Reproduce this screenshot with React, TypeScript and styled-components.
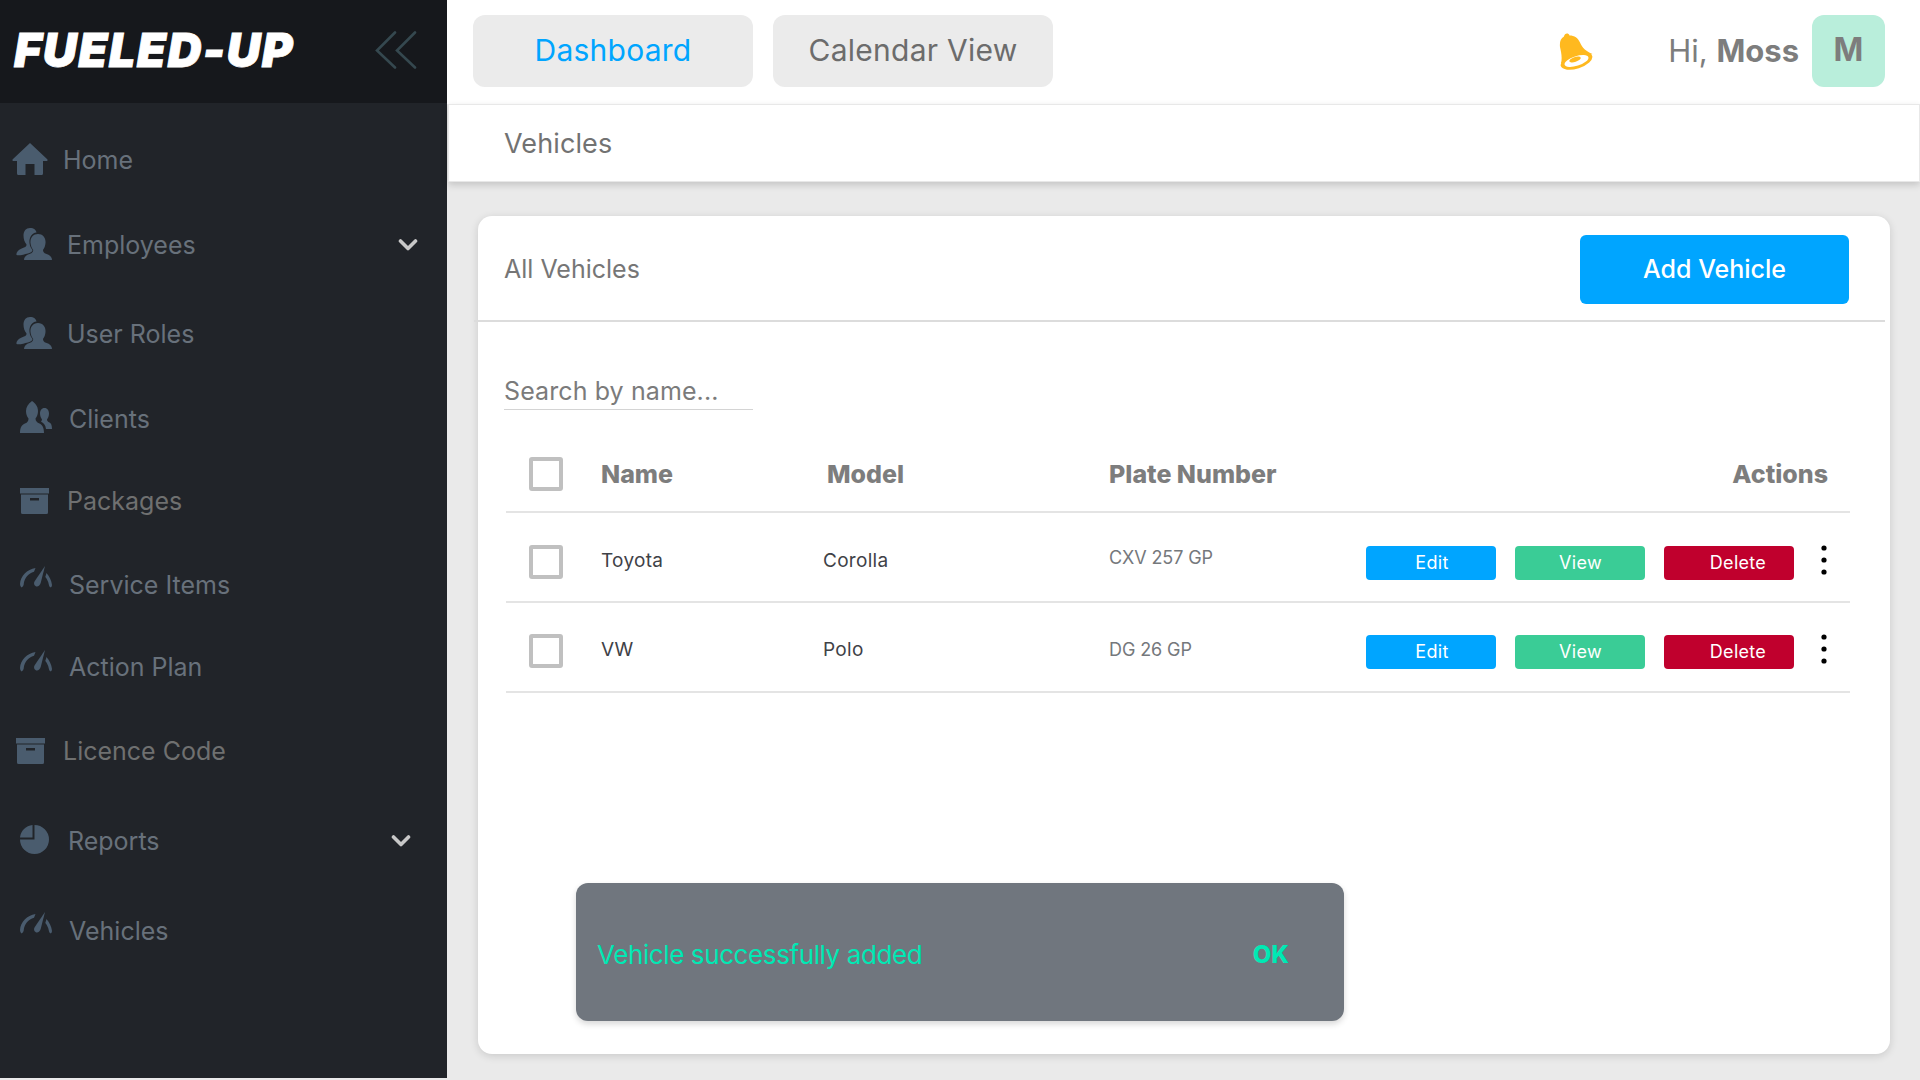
import React from 'react';
import styled, { createGlobalStyle } from 'styled-components';

const GlobalStyle = createGlobalStyle`
    html, body {
        margin: 0;
        padding: 0;
        background: #eaeaea;
    }
    body {
        font-family: Inter, 'Noto Sans', 'Liberation Sans', sans-serif;
    }
    * {
        box-sizing: border-box;
    }
`;

const Page = styled.div`
    display: flex;
    align-items: flex-start;
    width: 1920px;
    height: 1080px;
    overflow: hidden;
    background: #eaeaea;
`;

const Sidebar = styled.aside`
    flex: 0 0 447px;
    height: 1078px;
    background: #212429;
`;

const Brand = styled.div`
    display: flex;
    align-items: center;
    justify-content: space-between;
    height: 103px;
    padding: 0 30px 4px 14px;
    background: #16181c;
`;

const Logo = styled.div`
    color: #fff;
    font-size: 47px;
    font-weight: 900;
    font-style: italic;
    letter-spacing: 1.4px;
    -webkit-text-stroke: 0.8px #fff;
`;

const NavList = styled.nav`
    display: flex;
    flex-direction: column;
`;

const NavItem = styled.div<{ $height: number; $indent: number; $gap: number; $shift: number }>`
    display: flex;
    align-items: center;
    height: ${(p) => p.$height}px;
    padding-left: ${(p) => p.$indent}px;
    padding-top: ${(p) => Math.max(0, p.$shift * 2)}px;
    padding-bottom: ${(p) => Math.max(0, -p.$shift * 2)}px;
    gap: ${(p) => p.$gap}px;
`;

const NavIconBox = styled.span<{ $lift: number }>`
    display: flex;
    margin-top: ${(p) => -p.$lift}px;
    color: #4a5c6e;
`;

const NavLabel = styled.span<{ $muted?: boolean }>`
    color: ${(p) => (p.$muted ? '#6f7070' : '#68717b')};
    font-size: 25px;
`;

const NavChevron = styled.span<{ $right: number }>`
    display: flex;
    margin-left: auto;
    margin-right: ${(p) => p.$right}px;
    color: #c8c8c8;
`;

const Main = styled.main`
    flex: 1;
    min-width: 0;
    display: flex;
    flex-direction: column;
`;

const TopBar = styled.header`
    display: flex;
    align-items: center;
    gap: 20px;
    height: 104px;
    padding: 0 35px 2px 26px;
    background: #fff;
`;

const TopTab = styled.div<{ $active?: boolean }>`
    display: flex;
    align-items: center;
    justify-content: center;
    width: 280px;
    height: 72px;
    padding-bottom: 2px;
    border-radius: 12px;
    background: #ebebeb;
    color: ${(p) => (p.$active ? '#00a5ff' : '#6c6c6c')};
    font-size: 30px;
    letter-spacing: 0.25px;
`;

const UserArea = styled.div`
    display: flex;
    align-items: center;
    margin-left: auto;
`;

const BellBox = styled.span`
    display: flex;
    margin-right: 75px;
`;

const Greeting = styled.span`
    margin-right: 13px;
    padding-bottom: 2px;
    color: #7d7d7d;
    font-size: 31px;

    b {
        font-weight: 700;
    }
`;

const Avatar = styled.div`
    display: flex;
    align-items: center;
    justify-content: center;
    width: 73px;
    height: 72px;
    padding-bottom: 4px;
    border-radius: 12px;
    background: #b9eedb;
    color: #7d7d7d;
    font-size: 32px;
    font-weight: 700;
`;

const SubBar = styled.div`
    display: flex;
    align-items: center;
    height: 78px;
    margin-left: 1px;
    padding-left: 55px;
    background: #fff;
    border: 1px solid #e8e8e8;
    box-shadow: 0 3px 7px rgba(0, 0, 0, 0.16);
    color: #727272;
    font-size: 27px;
    letter-spacing: 0.1px;
`;

const Card = styled.section`
    position: relative;
    height: 838px;
    margin: 34px 30px 0 31px;
    border-radius: 14px;
    background: #fff;
    box-shadow: 0 2px 8px rgba(0, 0, 0, 0.14);
`;

const CardHeader = styled.div`
    display: flex;
    align-items: center;
    justify-content: space-between;
    height: 104px;
    padding: 2px 41px 0 26px;
`;

const CardTitle = styled.h2`
    margin: 0;
    color: #767676;
    font-size: 25px;
    font-weight: 400;
`;

const AddButton = styled.button`
    width: 269px;
    height: 69px;
    border: 0;
    border-radius: 6px;
    background: #00a5ff;
    color: #fff;
    font-family: inherit;
    font-size: 25px;
    font-weight: 500;
`;

const HeaderRule = styled.hr`
    height: 2px;
    margin: 0 5px 0 -4px;
    border: 0;
    background: #dcdcdc;
`;

const SearchBox = styled.div`
    display: flex;
    align-items: center;
    width: 249px;
    height: 46px;
    margin: 42px 0 0 26px;
    padding-top: 8px;
    border-bottom: 1px solid #d4d4d4;
    color: #7b7b7b;
    font-size: 25px;
    letter-spacing: 0.1px;
`;

const Table = styled.div`
    margin: 16px 40px 0 28px;
`;

const HeadRow = styled.div`
    display: grid;
    grid-template-columns: 95px 222px 286px 257px 1fr;
    align-items: center;
    height: 87px;
    padding-top: 10px;
    border-bottom: 2px solid #e4e4e4;
`;

const BodyRow = styled.div<{ $top: number }>`
    display: grid;
    grid-template-columns: 95px 222px 286px 257px 1fr;
    align-items: center;
    height: 90px;
    padding-top: ${(p) => p.$top}px;
    border-bottom: 2px solid #e4e4e4;
`;

const CheckCell = styled.div<{ $drop?: number }>`
    padding-left: 23px;
    padding-top: ${(p) => p.$drop || 0}px;
`;

const CheckBox = styled.span`
    display: block;
    width: 34px;
    height: 34px;
    border: 4px solid #c0c0c0;
    border-radius: 3px;
`;

const HeadCell = styled.div<{ $inset?: number; $align?: string }>`
    padding-left: ${(p) => p.$inset || 0}px;
    padding-right: ${(p) => (p.$align ? 22 : 0)}px;
    text-align: ${(p) => p.$align || 'left'};
    color: #7d7d7d;
    font-size: 25px;
    font-weight: 800;
`;

const BodyCell = styled.div`
    color: #3f4247;
    font-size: 19px;
    letter-spacing: 0.3px;
`;

const PlateCell = styled.div<{ $lift: number }>`
    padding-bottom: ${(p) => p.$lift}px;
    color: #75787c;
    font-size: 18px;
    letter-spacing: -0.1px;
`;

const ActionCell = styled.div`
    display: flex;
    align-items: center;
    gap: 19px;
`;

const ActionButton = styled.button<{ $color: string; $inset: number }>`
    width: 130px;
    height: 34px;
    margin-top: 5px;
    padding: 0 0 0 ${(p) => p.$inset}px;
    border: 0;
    border-radius: 4px;
    background: ${(p) => p.$color};
    color: #fff;
    font-family: inherit;
    font-size: 18px;
    letter-spacing: 0.3px;
`;

const MoreBox = styled.span`
    display: flex;
    margin-left: 8px;
`;

const Snackbar = styled.div`
    position: absolute;
    left: 98px;
    top: 667px;
    display: flex;
    align-items: center;
    justify-content: space-between;
    width: 768px;
    height: 138px;
    padding: 5px 55px 0 21px;
    border-radius: 12px;
    background: #70767e;
    box-shadow: 0 3px 6px rgba(0, 0, 0, 0.16);
    color: #00e9b4;
`;

const SnackText = styled.span`
    font-size: 26px;
    letter-spacing: -0.4px;
`;

const SnackAction = styled.span`
    font-size: 24px;
    font-weight: 800;
`;

const HomeIcon = () => (
    <svg width="36" height="32" viewBox="0 0 36 32" fill="currentColor">
        <path d="M18 0 35.5 16.5Q36 18 34.5 18H31V30.5Q31 32 29.5 32H22.5V21H13.5V32H6.5Q5 32 5 30.5V18H1.5Q0 18 .5 16.5Z" />
    </svg>
);

const UserPairIcon = () => (
    <svg width="36" height="32" viewBox="0 0 36 32" fill="currentColor">
        <path d="M14 0C18 0 20 2 20.5 4.500C16 5 13 9 13.500 15C13.800 18 15 20 16.500 22C16.500 23.500 15 24.500 12 25.500C8 26.500 3 28 .5 27C0 24 3 21 8 19.500C10 18.800 10.500 18 10.500 16.500C8.500 14 7.500 11 7.500 7.500C7.500 3 10 0 14 0Z" />
        <path d="M22 6C27 6 30 10 29.500 15C29.300 18 28.300 20 27 22C27 24 28 25 30 25.800C34 27 36 29 36 32H8C8 29 10 27 14 25.800C16 25 17.200 24 17.200 22C15.800 20 14.800 18 14.500 15C14 10 17 6 22 6Z" />
    </svg>
);

const ClientsIcon = () => (
    <svg width="32" height="32" viewBox="0 0 32 32" fill="currentColor">
        <path d="M12 0C15 2 18 5 18 10C18 13 17 15.500 15.500 17.500C15.500 20 17 21.500 19.500 22.500C22 23.800 24 26 24 32H0C0 26 2 23.800 5 22.500C7.500 21.500 8.500 20 8.500 17.500C7 15.500 6 13 6 10C6 6 8 3 12 0Z" />
        <path d="M24.500 7C27.500 7 29 9.500 29 12.500C29 15 28 17 27 18.500C27 20 28 20.800 29.500 21.500C31 22.300 32 24 32 28H26C25.500 24 23.500 22 21 20.800C21.500 20 21.800 19.300 22 18.500C21 17 20 15 20 12.500C20 9.500 21.500 7 24.500 7Z" />
    </svg>
);

const GaugeIcon = () => (
    <svg width="32" height="22" viewBox="0 0 32 22" fill="currentColor">
        <path d="M1.500 21.500Q0 20.500 0 18C.5 10 7 3.500 15.500 2L14 5.800C8.500 7.500 4.200 12 3.700 18.500Q3.500 20.500 1.500 21.500Z" />
        <path d="M25 0 20.800 16.500C20 19.500 17.800 21 15.800 20.200C13.800 19.300 13.500 17 14.800 15Z" />
        <path d="M26.500 7C29.500 10.500 31.500 14.500 32 19Q32 20.800 30.800 21.500Q29 20.800 28.800 18.500C28.300 15.500 27 13 25.300 11Z" />
    </svg>
);

const BoxIcon = () => (
    <svg width="29" height="26" viewBox="0 0 29 26" fill="currentColor" fillRule="evenodd">
        <rect x="0" y="0" width="29" height="5.500" />
        <path d="M1 6.500H28V24.500Q28 26 26.500 26H2.500Q1 26 1 24.500ZM10 10V12.500H19V10Z" />
    </svg>
);

const PieIcon = () => (
    <svg width="29" height="29" viewBox="0 0 29 29" fill="currentColor">
        <path d="M14.500 0A14.500 14.500 0 1 1 0 14.500H14.500Z" />
        <path d="M12.500 0V12.500H0A14 14 0 0 1 12.500 0Z" />
    </svg>
);

const ChevronIcon = () => (
    <svg width="20" height="14" viewBox="0 0 20 14" fill="none">
        <path d="M2.500 3 10 10.500 17.500 3" stroke="currentColor" strokeWidth="3.600" strokeLinecap="round" strokeLinejoin="round" />
    </svg>
);

const CollapseIcon = () => (
    <svg width="42" height="38" viewBox="0 0 42 38" fill="none" stroke="#35484f" strokeWidth="2.600" strokeLinecap="round">
        <path d="M20 1.500 2 19.500 20 36.500" />
        <path d="M40 1.500 22 19.500 40 36.500" />
    </svg>
);

const BellIcon = () => (
    <svg width="34" height="37" viewBox="0 0 34 37" fill="none">
        <path d="M5 3.500C5.500 0 9.500-.5 10.500 2.500C15.500 2.500 19 5 21 9.500C23 14.500 27 18.500 33.500 21L2 30.500C3.500 24 2 19 1 14C.5 9 1.500 5.500 5 3.500Z" fill="#ffb91f" />
        <ellipse cx="17.500" cy="28" rx="16.500" ry="7.500" transform="rotate(-18 17.500 28)" fill="#ffb91f" />
        <ellipse cx="17.500" cy="28" rx="12.500" ry="4.800" transform="rotate(-18 17.500 28)" fill="#fff" />
        <ellipse cx="16" cy="26.500" rx="6" ry="2.400" transform="rotate(-18 16 26.500)" fill="#ffb91f" />
    </svg>
);

const MoreIcon = () => (
    <svg width="6" height="30" viewBox="0 0 6 30" fill="#000">
        <circle cx="3" cy="3" r="2.600" />
        <circle cx="3" cy="15" r="2.600" />
        <circle cx="3" cy="27" r="2.600" />
    </svg>
);

const NAV_ITEMS = [
    { label: 'Home', icon: <HomeIcon />, height: 99, indent: 12, gap: 15, lift: 2, shift: 7 },
    { label: 'Employees', icon: <UserPairIcon />, height: 85, indent: 16, gap: 15, lift: 2, shift: 0, chevron: 29 },
    { label: 'User Roles', icon: <UserPairIcon />, height: 89, indent: 16, gap: 15, lift: 2, shift: 2 },
    { label: 'Clients', icon: <ClientsIcon />, height: 84, indent: 20, gap: 17, lift: 4, shift: 1 },
    { label: 'Packages', icon: <BoxIcon />, height: 84, indent: 20, gap: 18, lift: 0, shift: -1, muted: true },
    { label: 'Service Items', icon: <GaugeIcon />, height: 83, indent: 20, gap: 17, lift: 16, shift: -1 },
    { label: 'Action Plan', icon: <GaugeIcon />, height: 82, indent: 20, gap: 17, lift: 13, shift: -1 },
    { label: 'Licence Code', icon: <BoxIcon />, height: 83, indent: 16, gap: 18, lift: 0, shift: 0, muted: true },
    { label: 'Reports', icon: <PieIcon />, height: 91, indent: 20, gap: 19, lift: 3, shift: 3, chevron: 36 },
    { label: 'Vehicles', icon: <GaugeIcon />, height: 89, indent: 20, gap: 17, lift: 16, shift: 3 },
];

const VEHICLES = [
    { name: 'Toyota', model: 'Corolla', plate: 'CXV 257 GP', top: 6, plateLift: 6 },
    { name: 'VW', model: 'Polo', plate: 'DG 26 GP', top: 4, plateLift: 0 },
];

const App: React.FunctionComponent = () => (
    <Page>
        <GlobalStyle />
        <Sidebar>
            <Brand>
                <Logo>FUELED-UP</Logo>
                <CollapseIcon />
            </Brand>
            <NavList>
                {NAV_ITEMS.map((item) => (
                    <NavItem
                        key={item.label}
                        $height={item.height}
                        $indent={item.indent}
                        $gap={item.gap}
                        $shift={item.shift}
                    >
                        <NavIconBox $lift={item.lift}>{item.icon}</NavIconBox>
                        <NavLabel $muted={item.muted}>{item.label}</NavLabel>
                        {item.chevron ? (
                            <NavChevron $right={item.chevron}>
                                <ChevronIcon />
                            </NavChevron>
                        ) : null}
                    </NavItem>
                ))}
            </NavList>
        </Sidebar>
        <Main>
            <TopBar>
                <TopTab $active>Dashboard</TopTab>
                <TopTab>Calendar View</TopTab>
                <UserArea>
                    <BellBox>
                        <BellIcon />
                    </BellBox>
                    <Greeting>
                        Hi, <b>Moss</b>
                    </Greeting>
                    <Avatar>M</Avatar>
                </UserArea>
            </TopBar>
            <SubBar>Vehicles</SubBar>
            <Card>
                <CardHeader>
                    <CardTitle>All Vehicles</CardTitle>
                    <AddButton>Add Vehicle</AddButton>
                </CardHeader>
                <HeaderRule />
                <SearchBox>Search by name...</SearchBox>
                <Table>
                    <HeadRow>
                        <CheckCell>
                            <CheckBox />
                        </CheckCell>
                        <HeadCell>Name</HeadCell>
                        <HeadCell $inset={4}>Model</HeadCell>
                        <HeadCell>Plate Number</HeadCell>
                        <HeadCell $align="right">Actions</HeadCell>
                    </HeadRow>
                    {VEHICLES.map((vehicle) => (
                        <BodyRow key={vehicle.name} $top={vehicle.top}>
                            <CheckCell $drop={4}>
                                <CheckBox />
                            </CheckCell>
                            <BodyCell>{vehicle.name}</BodyCell>
                            <BodyCell>{vehicle.model}</BodyCell>
                            <PlateCell $lift={vehicle.plateLift}>{vehicle.plate}</PlateCell>
                            <ActionCell>
                                <ActionButton $color="#00a5ff" $inset={2}>
                                    Edit
                                </ActionButton>
                                <ActionButton $color="#3acc96" $inset={1}>
                                    View
                                </ActionButton>
                                <ActionButton $color="#c0002d" $inset={18}>
                                    Delete
                                </ActionButton>
                                <MoreBox>
                                    <MoreIcon />
                                </MoreBox>
                            </ActionCell>
                        </BodyRow>
                    ))}
                </Table>
                <Snackbar>
                    <SnackText>Vehicle successfully added</SnackText>
                    <SnackAction>OK</SnackAction>
                </Snackbar>
            </Card>
        </Main>
    </Page>
);

export default App;
